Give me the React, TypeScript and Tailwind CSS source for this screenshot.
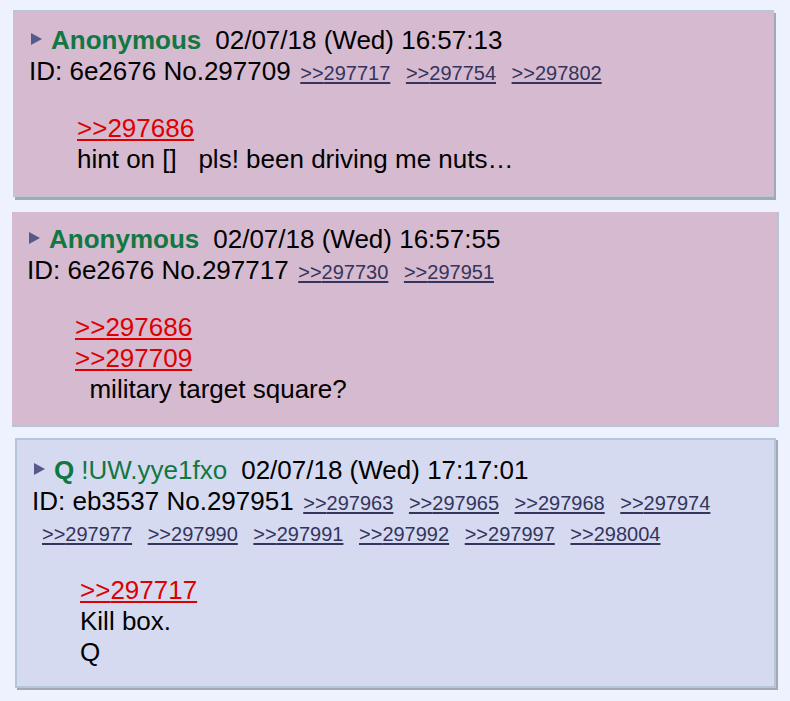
import React from 'react';

type PostData = {
  name: string;
  trip?: string;
  date: string;
  id: string;
  no: string;
  backlinks: string[];
  quotes: string[];
  lines: string[];
};

const posts: PostData[] = [
  {
    name: 'Anonymous',
    date: '02/07/18 (Wed) 16:57:13',
    id: '6e2676',
    no: '297709',
    backlinks: ['297717', '297754', '297802'],
    quotes: ['297686'],
    lines: ['hint on []\u00a0\u00a0 pls! been driving me nuts\u2026'],
  },
  {
    name: 'Anonymous',
    date: '02/07/18 (Wed) 16:57:55',
    id: '6e2676',
    no: '297717',
    backlinks: ['297730', '297951'],
    quotes: ['297686', '297709'],
    lines: ['\u00a0\u00a0military target square?'],
  },
  {
    name: 'Q',
    trip: '!UW.yye1fxo',
    date: '02/07/18 (Wed) 17:17:01',
    id: 'eb3537',
    no: '297951',
    backlinks: ['297963', '297965', '297968', '297974', '297977', '297990', '297991', '297992', '297997', '298004'],
    quotes: ['297717'],
    lines: ['Kill box.', 'Q'],
  },
];

const MenuArrow = () => (
  <svg width="11" height="12" viewBox="0 0 11 12" className="inline-block align-[4px] ml-[2px] mr-[9px]">
    <path d="M0 0 L11 6 L0 12 Z" fill="#555a88" />
  </svg>
);

const PostBody: React.FC<{ post: PostData; bodyTop: string }> = ({ post, bodyTop }) => (
  <>
    <div>
      <MenuArrow />
      <span className="font-bold text-[#117743]">{post.name}</span>
      {post.trip && <span className="ml-[7px] text-[#117743]">{post.trip}</span>}
      <span className="ml-[14px]">{post.date}</span>
    </div>
    <div>
      ID: {post.id} No.{post.no}
      <span className="text-[20px] leading-[20px]">
        {post.backlinks.map((b, i) => (
          <React.Fragment key={b}>
            {' '}
            <a
              className={
                i === 0
                  ? 'ml-[4px] text-[#34345c] underline decoration-2 underline-offset-2'
                  : 'ml-[10px] text-[#34345c] underline decoration-2 underline-offset-2'
              }
            >
              &gt;&gt;{b}
            </a>
          </React.Fragment>
        ))}
      </span>
    </div>
    <div className={`ml-[48px] ${bodyTop}`}>
      {post.quotes.map((q) => (
        <div key={q}>
          <a className="text-[#dd0000] underline decoration-2 underline-offset-2">&gt;&gt;{q}</a>
        </div>
      ))}
      {post.lines.map((l) => (
        <div key={l}>{l}</div>
      ))}
    </div>
  </>
);

export default function App() {
  return (
    <div className="min-h-screen bg-[#eef2ff] font-['Liberation_Sans',Arial,sans-serif] text-[26px] leading-[31px] text-black overflow-hidden">
      <div className="pt-[10px]">
        {/* first reply, highlighted */}
        <div className="ml-[13px] w-[761px] bg-[#d6bad0] border-t border-r border-b border-[#b7c5d9] shadow-[2px_3px_0_#a3a8b1] pl-[16px] pt-[14px] pb-[21px]">
          <PostBody post={posts[0]} bodyTop="mt-[26px]" />
        </div>

        {/* second reply, highlighted */}
        <div className="mt-[15px] ml-[12px] w-[767px] bg-[#d6bad0] border-r-2 border-b-2 border-[#b7c5d9] pl-[15px] pt-[12px] pb-[20px]">
          <PostBody post={posts[1]} bodyTop="mt-[26px]" />
        </div>

        {/* Q reply */}
        <div className="mt-[11px] ml-[15px] w-[761px] bg-[#d6daf0] border-2 border-[#b7c5d9] shadow-[2px_2px_0_#a3a8b1] pl-[15px] pt-[15px] pb-[18px]">
          <PostBody post={posts[2]} bodyTop="mt-[27px]" />
        </div>
      </div>
    </div>
  );
}
